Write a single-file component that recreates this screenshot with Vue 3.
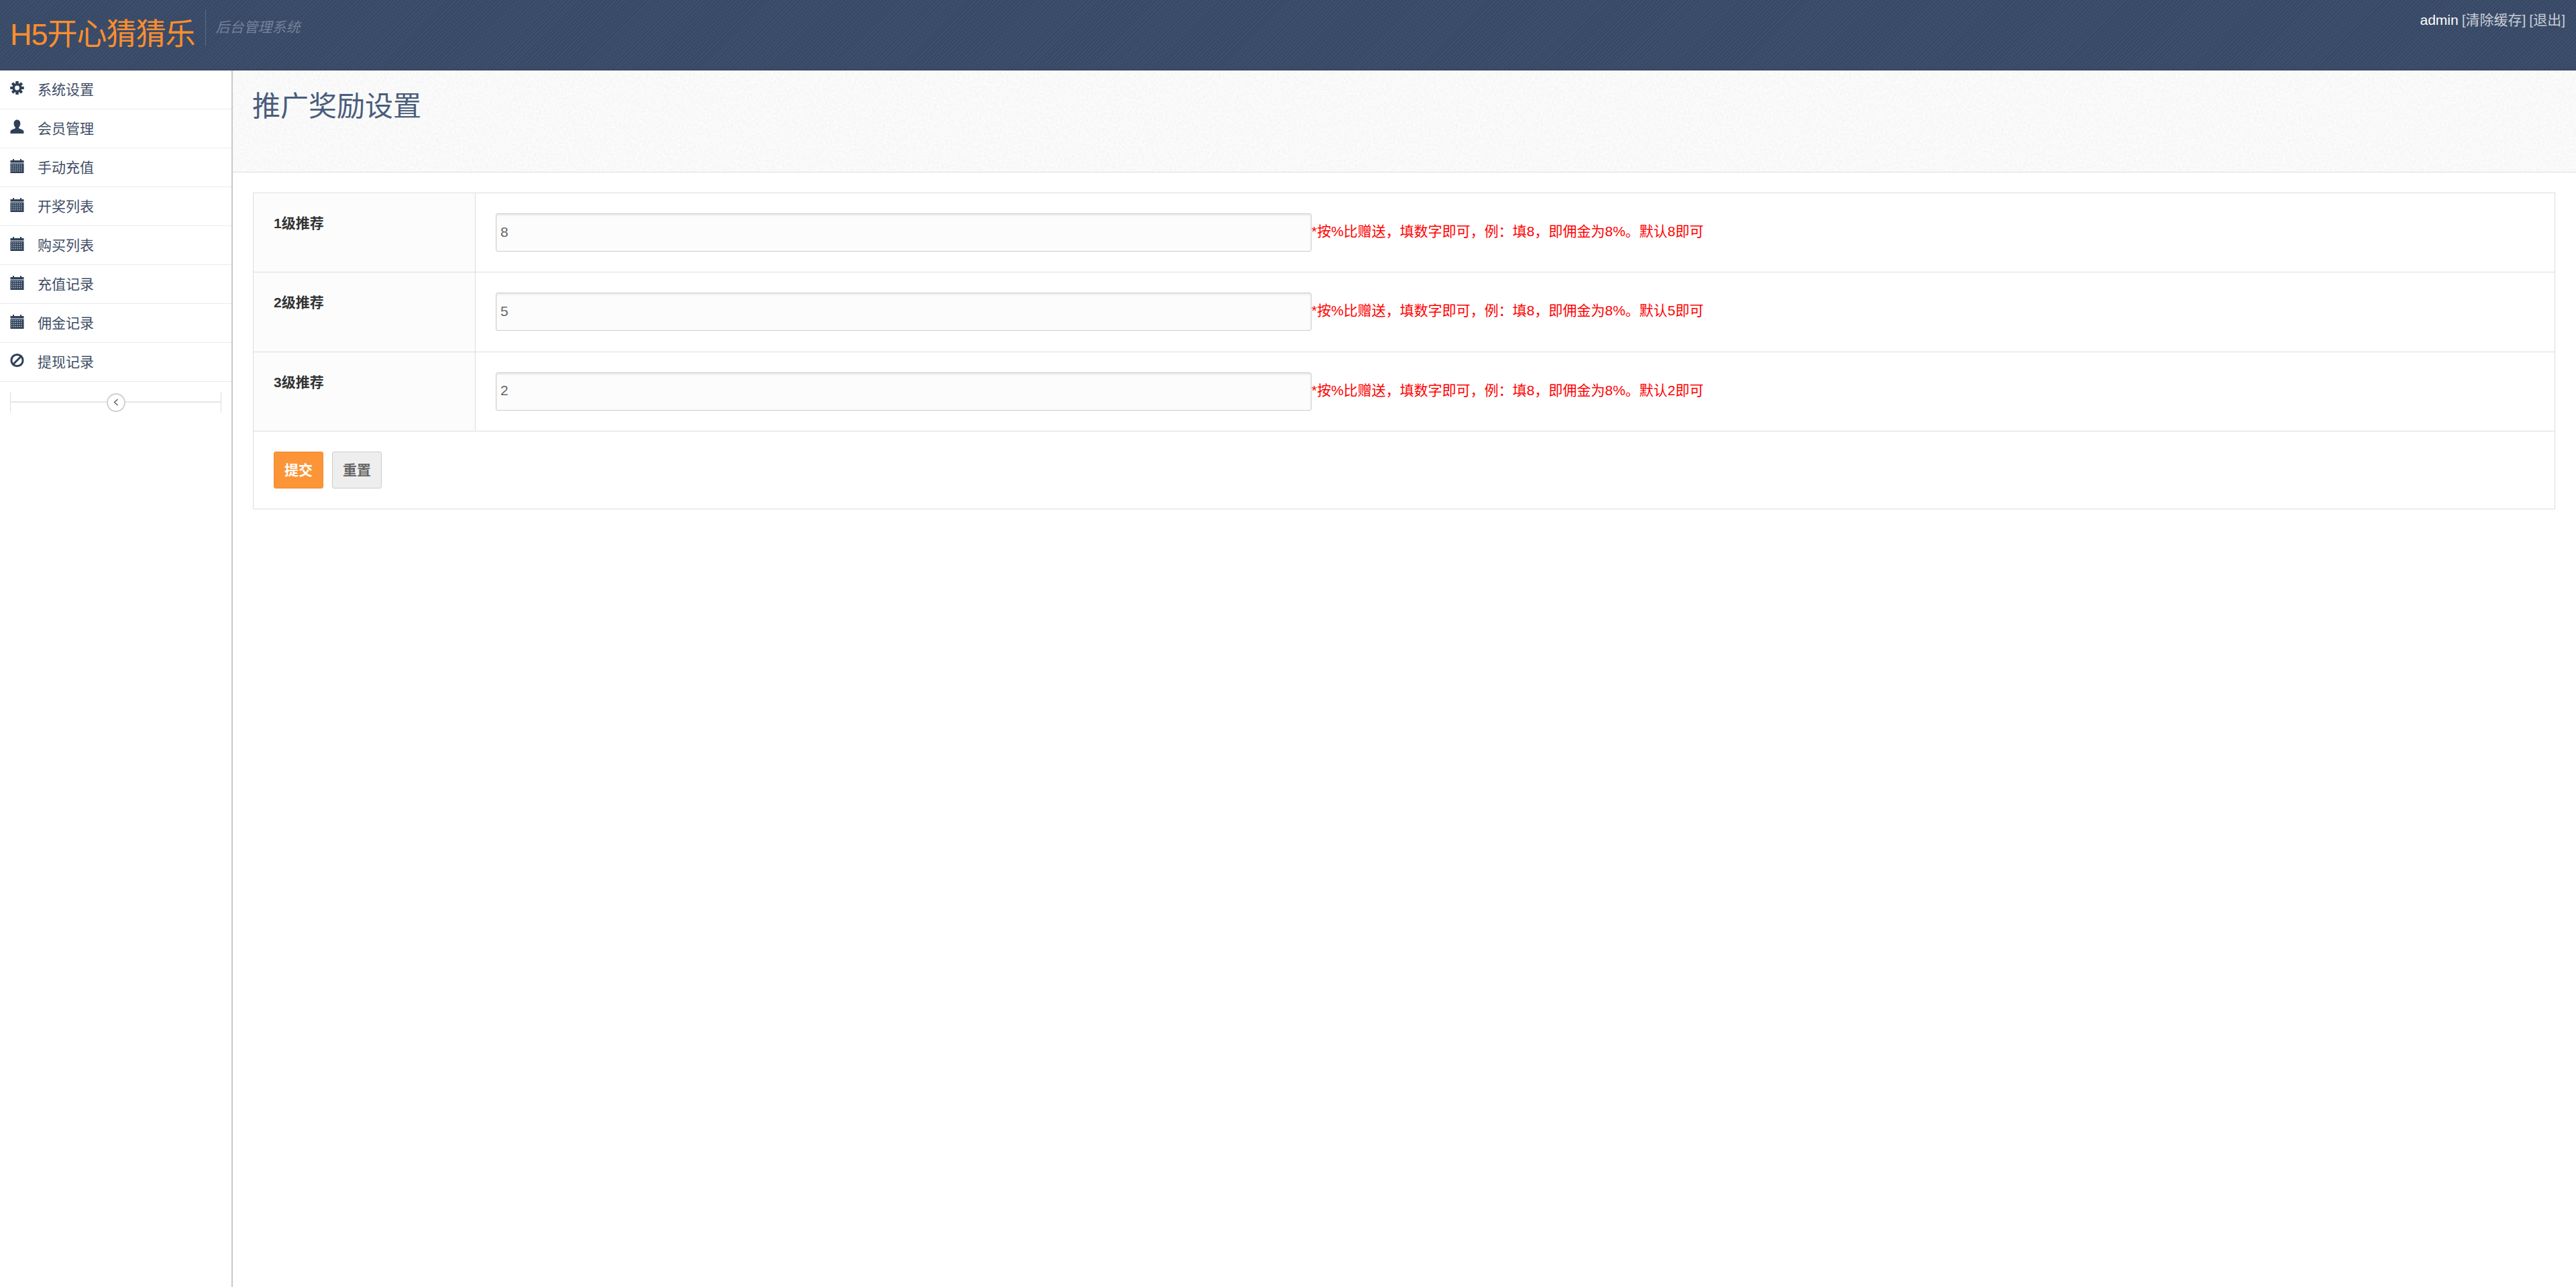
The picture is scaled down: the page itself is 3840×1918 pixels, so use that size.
<script setup>
const menu = [
  { label: '系统设置', icon: 'gear' },
  { label: '会员管理', icon: 'user' },
  { label: '手动充值', icon: 'calendar' },
  { label: '开奖列表', icon: 'calendar' },
  { label: '购买列表', icon: 'calendar' },
  { label: '充值记录', icon: 'calendar' },
  { label: '佣金记录', icon: 'calendar' },
  { label: '提现记录', icon: 'ban' }
]
const rows = [
  { label: '1级推荐', value: '8', def: '8' },
  { label: '2级推荐', value: '5', def: '5' },
  { label: '3级推荐', value: '2', def: '2' }
]
const teeth = [0, 45, 90, 135, 180, 225, 270, 315]
const cells = []
for (let y = 0; y < 4; y++) for (let x = 0; x < 6; x++) cells.push({ x: 1.6 + x * 2.85, y: 9.2 + y * 2.95 })
</script>

<template>
  <div class="app">
    <header class="topbar">
      <div class="brand">
        <span class="logo">H5开心猜猜乐</span>
        <span class="subtitle">后台管理系统</span>
      </div>
      <div class="account">
        <span class="admin">admin</span>
        <a class="link">[清除缓存]</a>
        <a class="link">[退出]</a>
      </div>
    </header>
    <div class="body">
      <aside class="sidebar">
        <ul class="menu">
          <li v-for="item in menu" :key="item.label" class="menu-item">
            <svg class="icon" viewBox="0 0 20 22" width="21" height="22">
              <g v-if="item.icon === 'gear'" transform="translate(10 11)">
                <rect v-for="t in teeth" :key="t" x="-2" y="-10" width="4" height="20" rx="0.6" :transform="`rotate(${t})`" />
                <circle r="5.2" fill="none" stroke="#2f4059" stroke-width="3.6" />
                <circle r="3.4" fill="#fff" />
              </g>
              <path v-else-if="item.icon === 'user'" d="M10 0.5c3 0 4.800 2.400 4.800 5.400 0 2.300-.8 4.300-2 5.600-.5.600-.4 1.600.2 2 1.800 1 6.500 1.700 6.900 4.200V21H0v-3.300c.4-2.500 5.100-3.200 6.900-4.200.7-.4.7-1.400.2-2-1.200-1.300-2-3.300-2-5.600C5.100 2.900 7 .5 10 .5z" />
              <g v-else-if="item.icon === 'calendar'">
                <path d="M0 3h3.500V1h2v2h9V1h2v2H20v3.500H0z" />
                <rect x="0" y="7.500" width="20" height="14.500" />
                <rect v-for="c in cells" :key="`${c.x}-${c.y}`" :x="c.x" :y="c.y" width="1.300" height="1.300" fill="#fff" fill-opacity="0.85" />
              </g>
              <g v-else>
                <circle cx="10" cy="11" r="8.600" fill="none" stroke="#2f4059" stroke-width="3" />
                <path d="M4.500 16.500 15.500 5.500" stroke="#2f4059" stroke-width="3" />
              </g>
            </svg>
            <span class="menu-label">{{ item.label }}</span>
          </li>
        </ul>
        <div class="collapse">
          <span class="collapse-btn">
            <svg viewBox="0 0 12 14" width="10" height="13"><path d="M9 1.500 3 7l6 5.500" fill="none" stroke="#555" stroke-width="1.600" /></svg>
          </span>
        </div>
      </aside>
      <main class="main">
        <div class="page-header">
          <svg class="noise" aria-hidden="true">
            <filter id="paper">
              <feTurbulence type="fractalNoise" baseFrequency="0.3" numOctaves="3" seed="4" />
              <feColorMatrix values="0 0 0 0 0.6  0 0 0 0 0.6  0 0 0 0 0.6  0.2 0.2 0 0 -0.14" />
            </filter>
            <rect width="100%" height="100%" filter="url(#paper)" />
          </svg>
          <h1 class="title">推广奖励设置</h1>
        </div>
        <div class="content">
          <form class="card" @submit.prevent>
            <div v-for="row in rows" :key="row.label" class="row">
              <div class="row-label">{{ row.label }}</div>
              <div class="row-field">
                <input class="field" type="text" :value="row.value" />
                <span class="hint">*按%比赠送，填数字即可，例：填8，即佣金为8%。默认{{ row.def }}即可</span>
              </div>
            </div>
            <div class="actions">
              <button class="btn primary" type="submit">提交</button>
              <button class="btn" type="reset">重置</button>
            </div>
          </form>
        </div>
      </main>
    </div>
  </div>
</template>

<style scoped>
.app {
  height: 100vh;
  display: flex;
  flex-direction: column;
  overflow: hidden;
  background: #fff;
  font-family: "Liberation Sans", "Noto Sans CJK SC", sans-serif;
  font-size: 21px;
  line-height: 31.5px;
  color: #333;
}
.topbar {
  height: 105px;
  flex: none;
  box-sizing: border-box;
  display: flex;
  justify-content: space-between;
  align-items: flex-start;
  padding: 0 16px 0 15px;
  border-bottom: 1px solid #2d3d57;
  background-color: #394b69;
  background-image: repeating-linear-gradient(135deg, rgba(255, 255, 255, 0.025) 0 2px, rgba(0, 0, 0, 0.04) 2px 4px);
}
.brand {
  display: flex;
  align-items: flex-start;
}
.logo {
  font-size: 45px;
  line-height: 74px;
  letter-spacing: -1px;
  color: #fb8e2d;
  padding-right: 15px;
  border-right: 1px solid #5b6c87;
  height: 53px;
  margin-top: 15px;
}
.subtitle {
  font-style: italic;
  color: #72829b;
  margin: 25px 0 0 15px;
}
.account {
  margin-top: 14px;
  color: #c9ced6;
}
.admin {
  color: #fff;
}
.link {
  margin-left: 5px;
}
.body {
  flex: 1;
  display: flex;
  min-height: 0;
}
.sidebar {
  width: 347px;
  flex: none;
  box-sizing: border-box;
  border-right: 2px solid #c8c8c8;
}
.menu {
  list-style: none;
  margin: 0;
  padding: 0;
}
.menu-item {
  height: 58px;
  box-sizing: border-box;
  display: flex;
  align-items: center;
  padding-left: 15px;
  border-bottom: 1px solid #eaeaea;
  color: #3f4e66;
}
.icon {
  flex: none;
  fill: #2f4059;
  margin: 0 20px 5px 0;
}
.collapse {
  position: relative;
  height: 31px;
  margin: 15px 15px 0;
  border: solid #ddd;
  border-width: 0 1px;
  display: flex;
  align-items: center;
  justify-content: center;
}
.collapse::before {
  content: "";
  position: absolute;
  left: 0;
  right: 0;
  top: 14px;
  border-top: 2px solid #e6e6e6;
}
.collapse-btn {
  position: relative;
  width: 28px;
  height: 28px;
  box-sizing: border-box;
  border: 2px solid #d2d2d2;
  border-radius: 50%;
  background: #fff;
  display: flex;
  align-items: center;
  justify-content: center;
}
.main {
  flex: 1;
  min-width: 0;
}
.page-header {
  position: relative;
  height: 152px;
  box-sizing: border-box;
  padding: 0 29px;
  border-bottom: 1px solid #ddd;
  background: #fcfcfc;
  overflow: hidden;
}
.noise {
  position: absolute;
  inset: 0;
  width: 100%;
  height: 100%;
}
.title {
  position: relative;
  margin: 0;
  padding-top: 22px;
  font-size: 42px;
  line-height: 63px;
  font-weight: 400;
  color: #4a5d7c;
}
.content {
  padding: 30px 31px 0 30px;
}
.card {
  border: 1px solid #ddd;
}
.row {
  display: grid;
  grid-template-columns: 331px 1fr;
  height: 118.3px;
  box-sizing: border-box;
  border-bottom: 1px solid #ddd;
}
.row-label {
  background: #fcfcfc;
  border-right: 1px solid #ddd;
  padding: 29px 30px;
  font-weight: 700;
}
.row-field {
  display: flex;
  align-items: flex-start;
  padding: 30px 0 0 30px;
}
.field {
  width: 1216px;
  height: 57px;
  box-sizing: border-box;
  padding: 0 6px 2px;
  border: 1px solid #ccc;
  border-radius: 3px;
  background: #fcfcfc;
  box-shadow: inset 0 2px 3px rgba(0, 0, 0, 0.08);
  font: inherit;
  color: #666;
  outline: none;
}
.hint {
  color: #f00;
  line-height: 53px;
}
.actions {
  display: flex;
  gap: 13px;
  padding: 30px;
}
.btn {
  width: 74px;
  height: 55px;
  padding: 0;
  box-sizing: border-box;
  border: 1px solid #ccc;
  border-radius: 3px;
  background: #eee;
  color: #666;
  font: inherit;
  font-weight: 700;
}
.btn.primary {
  background: #fb9537;
  border-color: #ee8a2e;
  color: #fff;
}
</style>
